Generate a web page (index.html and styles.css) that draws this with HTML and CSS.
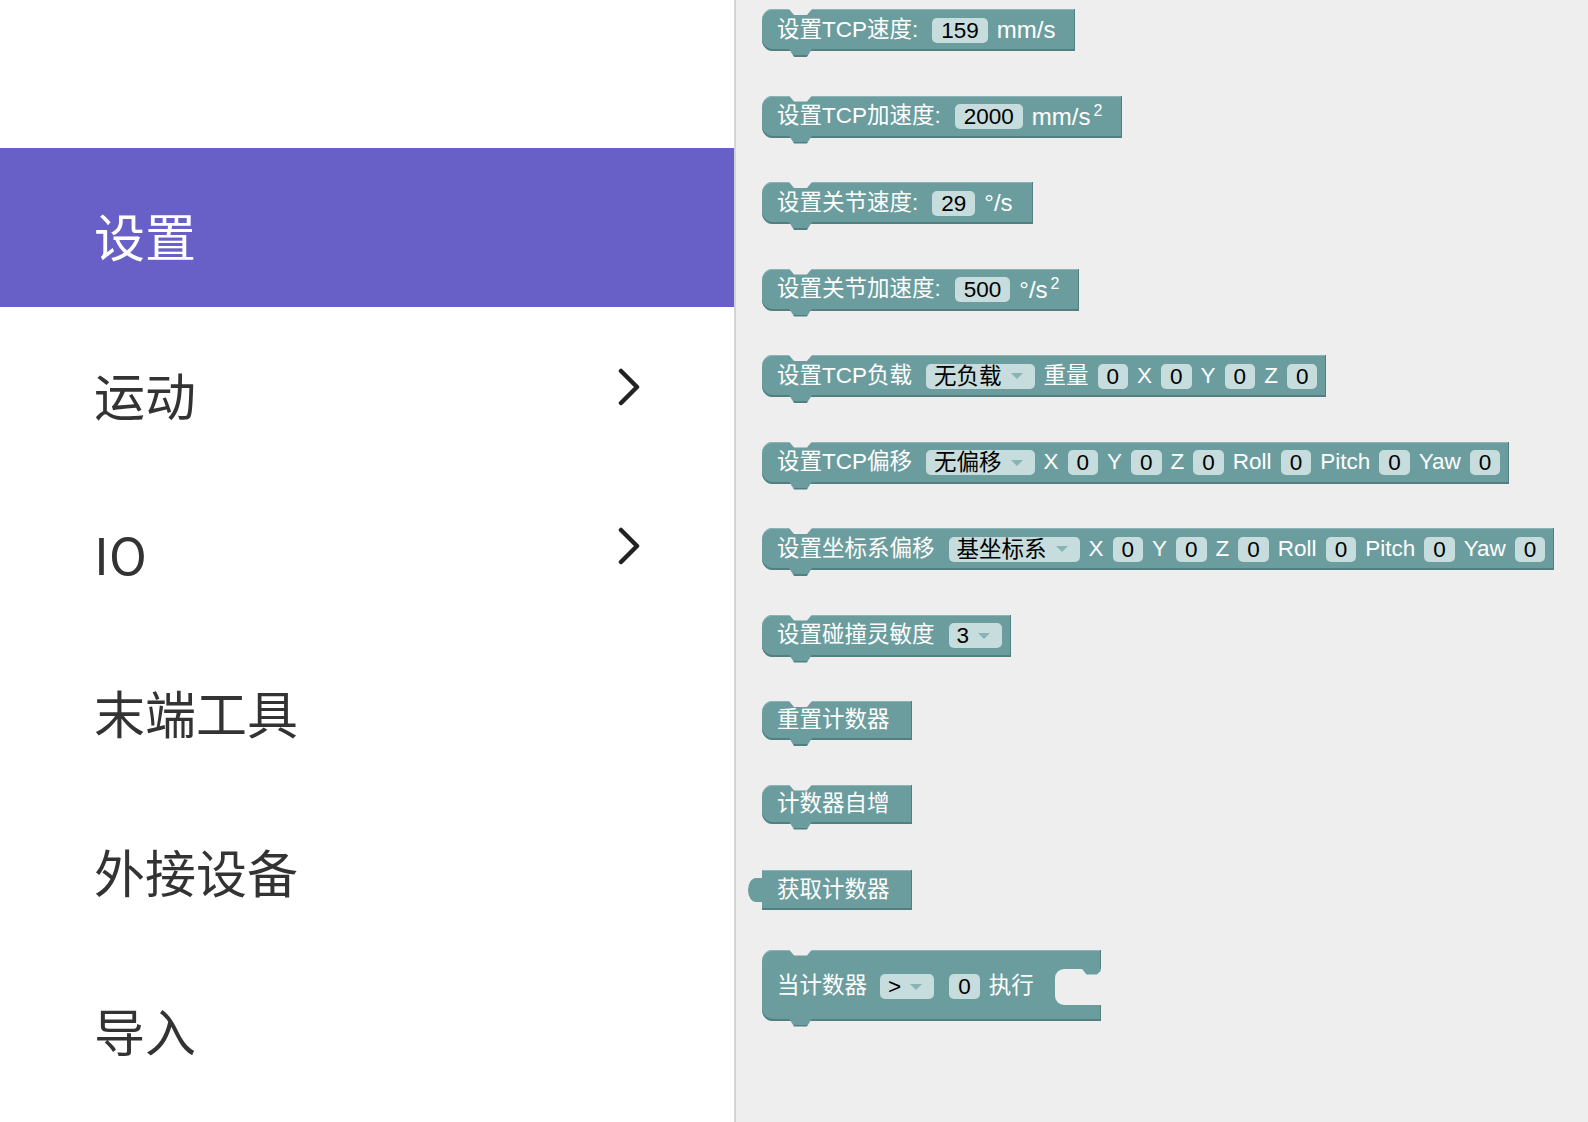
FILE: index.html
```html
<!DOCTYPE html>
<html lang="zh-CN">
<head>
<meta charset="utf-8">
<title>积木</title>
<link rel="stylesheet" href="styles.css">
</head>
<body>
<div class="app">
  <nav class="sidebar">
    <div class="menu-item active"><span>设置</span></div>
    <div class="menu-item"><span>运动</span><svg class="chev" viewBox="0 0 24 38"><polyline points="4,3 20,19 4,35"/></svg></div>
    <div class="menu-item"><span>IO</span><svg class="chev" viewBox="0 0 24 38"><polyline points="4,3 20,19 4,35"/></svg></div>
    <div class="menu-item"><span>末端工具</span></div>
    <div class="menu-item"><span>外接设备</span></div>
    <div class="menu-item"><span>导入</span></div>
  </nav>
  <main class="canvas">
    <div class="block"><span class="lbl colon">设置TCP速度:</span><span class="num">159</span><span class="lbl unit end">mm/s</span></div>
    <div class="block"><span class="lbl colon">设置TCP加速度:</span><span class="num">2000</span><span class="lbl unit end">mm/s<sup>2</sup></span></div>
    <div class="block"><span class="lbl colon">设置关节速度:</span><span class="num">29</span><span class="lbl unit end">°/s</span></div>
    <div class="block"><span class="lbl colon">设置关节加速度:</span><span class="num">500</span><span class="lbl unit end">°/s<sup>2</sup></span></div>
    <div class="block"><span class="lbl">设置TCP负载</span><span class="dd"><span class="txt">无负载</span><i class="arrow"></i></span><span class="lbl">重量</span><span class="num">0</span><span class="lbl">X</span><span class="num">0</span><span class="lbl">Y</span><span class="num">0</span><span class="lbl">Z</span><span class="num">0</span></div>
    <div class="block"><span class="lbl">设置TCP偏移</span><span class="dd"><span class="txt">无偏移</span><i class="arrow"></i></span><span class="lbl">X</span><span class="num">0</span><span class="lbl">Y</span><span class="num">0</span><span class="lbl">Z</span><span class="num">0</span><span class="lbl">Roll</span><span class="num">0</span><span class="lbl">Pitch</span><span class="num">0</span><span class="lbl">Yaw</span><span class="num">0</span></div>
    <div class="block"><span class="lbl">设置坐标系偏移</span><span class="dd"><span class="txt">基坐标系</span><i class="arrow"></i></span><span class="lbl">X</span><span class="num">0</span><span class="lbl">Y</span><span class="num">0</span><span class="lbl">Z</span><span class="num">0</span><span class="lbl">Roll</span><span class="num">0</span><span class="lbl">Pitch</span><span class="num">0</span><span class="lbl">Yaw</span><span class="num">0</span></div>
    <div class="block"><span class="lbl">设置碰撞灵敏度</span><span class="dd"><span class="txt">3</span><i class="arrow"></i></span></div>
    <div class="block plain"><span class="lbl">重置计数器</span></div>
    <div class="block plain"><span class="lbl">计数器自增</span></div>
    <div class="block value"><span class="lbl">获取计数器</span></div>
    <div class="block cblock"><span class="lbl">当计数器</span><span class="dd"><span class="txt">&gt;</span><i class="arrow"></i></span><span class="num after-dd">0</span><span class="lbl">执行</span><span class="slot"></span></div>
  </main>
</div>
</body>
</html>
```
FILE: styles.css
```css
* { box-sizing: border-box; }
html, body { margin: 0; padding: 0; }
body {
  width: 1588px;
  height: 1122px;
  overflow: hidden;
  background: #eeeeee;
  font-family: "Liberation Sans", "Noto Sans CJK SC", sans-serif;
}
.app { display: flex; height: 1122px; }

.sidebar {
  width: 736px;
  flex: none;
  background: #ffffff;
  border-right: 2px solid #d4d4d4;
  padding-top: 148px;
  display: flex;
  flex-direction: column;
}
.menu-item {
  height: 159px;
  flex: none;
  display: flex;
  align-items: center;
  justify-content: space-between;
  padding: 15px 93px 0 94px;
  font-family: "Noto Sans CJK SC", sans-serif;
  font-size: 51px;
  line-height: 1;
  color: #333333;
}
.menu-item.active { background: #6860c6; color: #ffffff; }
.chev {
  width: 24px;
  height: 38px;
  margin-top: -15px;
  fill: none;
  stroke: #222222;
  stroke-width: 4.5;
  stroke-linecap: round;
  stroke-linejoin: round;
}

.canvas {
  flex: 1;
  display: flex;
  flex-direction: column;
  align-items: flex-start;
  gap: 44.5px;
  padding: 9px 0 0 26px;
}
.block {
  position: relative;
  display: flex;
  align-items: center;
  gap: 9px;
  height: 42px;
  padding: 0 9px 0 15px;
  background: #6c9d9e;
  color: #ffffff;
  border-radius: 11px 0 0 11px;
  box-shadow: inset 0 -2px 0 #527f80, inset -1px 0 0 #527f80, inset 0 1px 0 #8db5b5;
  font-size: 22.5px;
  line-height: 1;
  white-space: nowrap;
}
.block::before {
  content: "";
  position: absolute;
  top: 0;
  left: 27px;
  width: 23px;
  height: 6px;
  background: #eeeeee;
  clip-path: polygon(0 0, 100% 0, 78% 100%, 22% 100%);
}
.block::after {
  content: "";
  position: absolute;
  top: calc(100% - 2px);
  left: 27px;
  width: 23px;
  height: 8px;
  background: linear-gradient(#6c9d9e 0 6px, #527f80 6px);
  clip-path: polygon(0 0, 100% 0, 78% 100%, 22% 100%);
}
.lbl.end { margin-right: 11px; }
.lbl.colon { margin-right: 5px; }
.lbl.unit { font-size: 24px; }
.lbl.unit sup {
  font-size: 16px;
  line-height: 0;
  vertical-align: 9px;
  margin-left: 3px;
}

.num {
  display: block;
  height: 25px;
  line-height: 25px;
  min-width: 30px;
  padding: 0 9px;
  text-align: center;
  background: #c7dcdc;
  color: #000000;
  border-radius: 5px;
}
.dd {
  display: flex;
  align-items: center;
  gap: 9px;
  height: 25px;
  padding: 0 12px 0 8px;
  margin-left: 5px;
  background: #c7dcdc;
  color: #000000;
  border-radius: 5px;
}
.dd .txt { line-height: 25px; }
.arrow {
  display: block;
  width: 0;
  height: 0;
  border-left: 6px solid transparent;
  border-right: 6px solid transparent;
  border-top: 6px solid #8ab4b4;
}

.block.plain { height: 39px; padding-right: 22px; }

.block.value {
  height: 40px;
  border-radius: 0;
  padding-right: 22px;
  margin-top: 2px;
}
.block.value::before {
  left: -14px;
  top: 8px;
  width: 15px;
  height: 24px;
  background: #6c9d9e;
  border-radius: 8px 0 0 8px / 12px 0 0 12px;
  clip-path: none;
}
.block.value::after { display: none; }

.block.cblock {
  height: 71px;
  padding: 3px 0 0 15px;
  margin-top: -5px;
}
.cblock .dd { margin-left: 4px; }
.cblock .after-dd { margin-left: 6px; }
.slot {
  position: relative;
  display: block;
  width: 46px;
  height: 36px;
  margin-left: 12px;
  background: #eeeeee;
  border-radius: 9px 0 0 9px;
}
.slot::after {
  content: "";
  position: absolute;
  top: 0;
  left: 27px;
  width: 19px;
  height: 6px;
  background: #6c9d9e;
  clip-path: polygon(0 0, 100% 0, 100% 40%, 80% 100%, 25% 100%);
}
```
